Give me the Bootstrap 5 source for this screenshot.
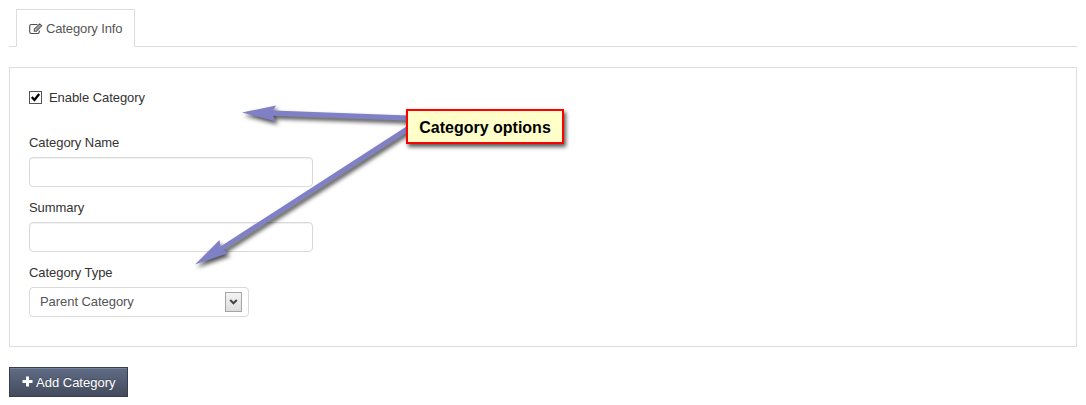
<!DOCTYPE html>
<html lang="en">
<head>
<meta charset="utf-8">
<meta name="viewport" content="width=device-width, initial-scale=1">
<title>Category Info</title>
<link href="https://cdn.jsdelivr.net/npm/bootstrap@5.3.0/dist/css/bootstrap.min.css" rel="stylesheet">
<style>
body{font-family:"Liberation Sans",Arial,sans-serif;font-size:13px;line-height:20px;letter-spacing:-.06px;color:#333;background:#fff;height:405px;overflow:hidden}
.page{padding:9px 9px 0 9px;width:1086px}
.nav-tabs{border-bottom:1px solid #ddd;padding-left:7px}
.nav-tabs .nav-link,.nav-tabs .nav-link.active{border:1px solid #ddd;border-bottom-color:#fff;border-radius:0;color:#555;width:119px;height:38px;padding:10px 12px 8px;line-height:20px;white-space:nowrap;letter-spacing:-.13px}
.nav-link svg{width:14px;height:12px;margin:-1px 3px 0 0;flex:none}
.panel{border:1px solid #ddd;border-radius:0;margin-top:20px;height:280px;padding:20px 19px 0}
.form-check{min-height:0;height:20px;padding:0;margin:0 0 25px}
.form-check .form-check-input{float:none;margin:-1px 7px 0 0;width:13px;height:13px;border:1px solid #555;border-radius:0;background-color:#fff;background-size:11px 11px;background-position:center}
.form-check-input:checked{background-image:url("data:image/svg+xml,%3Csvg xmlns='http://www.w3.org/2000/svg' viewBox='0 0 11 11'%3E%3Cpath d='M1.800 5 4.400 7.900 9.200 2' fill='none' stroke='%23000' stroke-width='2.300'/%3E%3C/svg%3E")}
.form-label{display:block;margin:0 0 4px;height:20px}
.form-control{width:284px;height:30px;padding:4px 6px;border:1px solid #d9d9d9;border-radius:4px;margin-bottom:11px;box-shadow:inset 0 1px 1px rgba(0,0,0,.06);font-size:13px}
.picker{width:220px;height:30px;border:1px solid #d9d9d9;border-radius:4px;padding:0 6px 0 10px;color:#555}
.picker-arrow{width:17px;height:20px;border:1px solid #a5a5a5;background:linear-gradient(#f3f3f3,#dedede)}
.btn-add{--bs-btn-color:#fff;width:119px;height:30px;margin-top:20px;padding:1px 0 0 12px;border:1px solid #373e50;border-radius:0;background:linear-gradient(#606c86,#444b5d);box-shadow:inset 0 1px 0 #76829a;color:#fff;font-size:13px;line-height:20px;text-align:left;text-shadow:0 -1px 0 rgba(0,0,0,.25)}
.btn-add svg{width:11px;height:11px;margin:-2px 3px 0 0}
.arrows{left:0;top:0;pointer-events:none;filter:drop-shadow(2px 3px 2px rgba(0,0,0,.7))}
.callout{left:406px;top:109px;width:158px;height:35px;padding-top:2px;border:2px solid #f00;background:#ffffca;color:#000;font-weight:bold;font-size:16px;letter-spacing:0;box-shadow:2px 3px 4px rgba(0,0,0,.65)}
</style>
</head>
<body class="position-relative">
<main class="page">
  <ul class="nav nav-tabs">
    <li class="nav-item">
      <a class="nav-link active d-flex align-items-center" href="#">
        <svg viewBox="0 0 14 12" fill="none" stroke="#4c4c4c"><path d="M8.500 1.500H2.400Q.7 1.500.7 3.200v5.600q0 1.700 1.700 1.700h6.200q1.700 0 1.700-1.700V7.600" stroke-width="1.100"/><path d="M5.300 6.200 10.700.9l2 1.900L7.400 8.200H5.300z" stroke-width="1.100"/><path d="M6.500 7 11.400 2.200" stroke-width="1"/></svg>Category Info</a>
    </li>
  </ul>
  <form class="panel">
    <div class="form-check d-flex align-items-center">
      <input class="form-check-input" type="checkbox" id="enable" checked>
      <label class="form-check-label" for="enable">Enable Category</label>
    </div>
    <label class="form-label" for="name">Category Name</label>
    <input class="form-control" id="name" type="text">
    <label class="form-label" for="summary">Summary</label>
    <input class="form-control" id="summary" type="text">
    <span class="form-label">Category Type</span>
    <div class="picker d-flex align-items-center justify-content-between" role="button">
      <span>Parent Category</span>
      <span class="picker-arrow d-flex align-items-center justify-content-center"><svg width="9" height="8" viewBox="0 0 9 8"><path d="M1.200 2 4.500 5.300 7.800 2" fill="none" stroke="#444" stroke-width="2"/></svg></span>
    </div>
  </form>
  <button class="btn btn-add d-flex align-items-center" type="button">
    <svg viewBox="0 0 11 11" fill="#fff"><path d="M4 .5h3V4h3.500v3H7v3.500H4V7H.5V4H4z"/></svg>Add Category</button>
</main>
<svg class="arrows position-absolute" width="1086" height="405" viewBox="0 0 1086 405" fill="#8080c6">
  <path d="M242 112.500 276 105.500 273 110.500 408 115.500V120.500L273 115.800 276 121.500z"/>
  <path d="M195 264.500 219.500 240 220.500 246.500 408 125.500V131.500L223.500 250 228.500 253z"/>
</svg>
<div class="callout position-absolute d-flex align-items-center justify-content-center">Category options</div>
<script src="https://cdn.jsdelivr.net/npm/bootstrap@5.3.0/dist/js/bootstrap.bundle.min.js"></script>
</body>
</html>
